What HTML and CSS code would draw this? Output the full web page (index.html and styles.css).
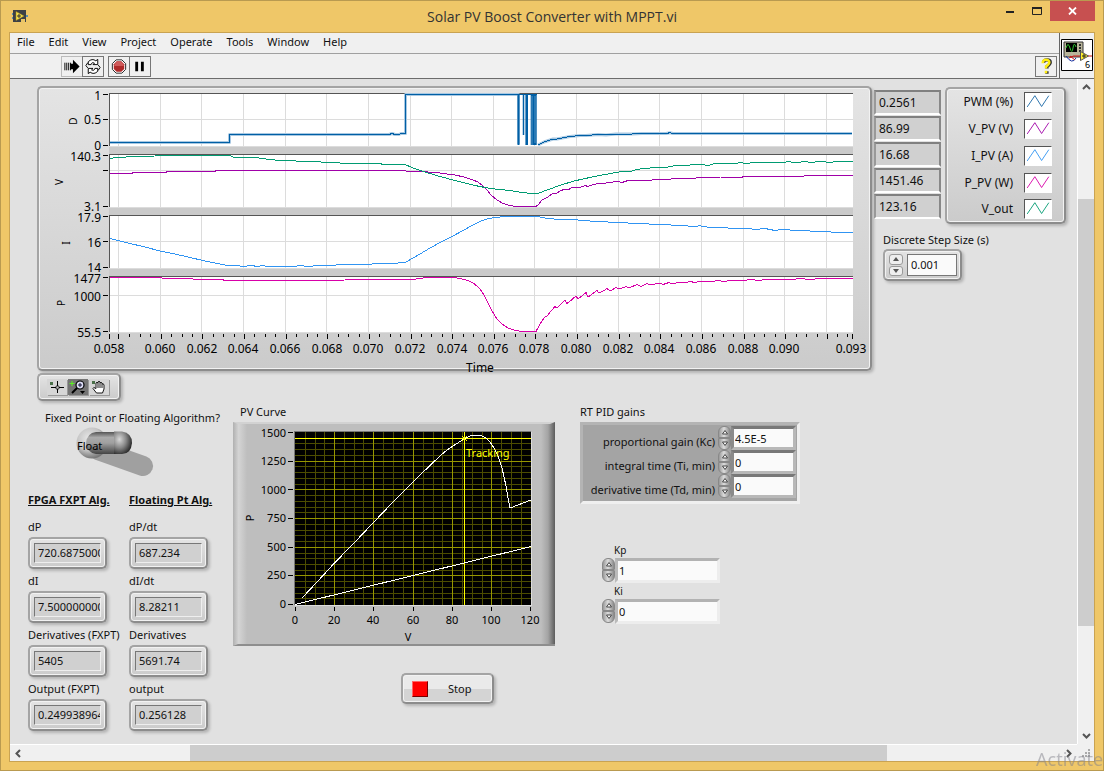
FILE: index.html
```html
<!DOCTYPE html>
<html lang="en">
<head>
<meta charset="utf-8">
<title>Solar PV Boost Converter with MPPT.vi</title>
<link rel="stylesheet" href="styles.css">
</head>
<body>
<svg class="defs" aria-hidden="true">
  <defs>
    <symbol id="tri-up" viewBox="0 0 8 6"><path d="M1.500 5 4 1.500 6.500 5z" fill="#fff" stroke="#444" stroke-width="1"/></symbol>
    <symbol id="tri-down" viewBox="0 0 8 6"><path d="M1.500 1 6.500 1 4 4.500z" fill="#fff" stroke="#444" stroke-width="1"/></symbol>
    <symbol id="wave" viewBox="0 0 28 20"><path d="M2 15.500 10.500 3 18 15 26 3" fill="none" stroke="currentColor"/></symbol>
  </defs>
</svg>
<div class="window">
  <header class="titlebar">
    <svg class="app-icon" viewBox="0 0 16 14"><path d="M0 4h2v2H0zM0 8h2v2H0zM14 6h2v2h-2z" fill="#5a8fae"/><path d="M1 1h13v12H1z" fill="#3d4146"/><path d="M4 2.500 12 7 4 11.500z" fill="#f5e04a" stroke="#a58a1a" stroke-width=".5"/><path d="M5 7h4M7 5v4" stroke="#333"/><path d="M9 10h4v3H9z" fill="#e9c566"/></svg>
    <h1 class="title">Solar PV Boost Converter with MPPT.vi</h1>
    <div class="window-buttons">
      <button class="win-btn" aria-label="Minimize"><svg width="10" height="10"><path d="M1 5h8v2H1z" fill="#222"/></svg></button>
      <button class="win-btn" aria-label="Maximize"><svg width="10" height="10"><path d="M.5 1.500h9v7h-9z" fill="none" stroke="#222"/><path d="M0 1h10v2H0z" fill="#222"/></svg></button>
      <button class="win-btn close" aria-label="Close"><svg width="9" height="8"><path d="M1 .5l7 7M8 .5l-7 7" stroke="#fff" stroke-width="1.800"/></svg></button>
    </div>
  </header>

  <div class="client">
    <div class="head">
      <div class="bars">
        <nav class="menu">
          <button>File</button><button>Edit</button><button>View</button><button>Project</button><button>Operate</button><button>Tools</button><button>Window</button><button>Help</button>
        </nav>
        <div class="toolbar">
          <div class="tool-group">
            <button class="tool light" aria-label="Run"><svg viewBox="0 0 20 20"><path d="M2.500 6v8M4.500 6v8M6.500 6v8M8.500 6v8" stroke="#000"/><path d="M8 7h3V3l7 7-7 7v-4H8z" fill="#000"/></svg></button>
            <button class="tool" aria-label="Run continuously"><svg viewBox="0 0 20 20" fill="#fff" stroke="#000" stroke-width="1"><path d="M5 8V5q4-4 8-1l2-1.500V8h-5l1.500-1.500Q8.500 5 8 8z"/><path d="M15 12v3q-4 4-8 1l-2 1.500V12h5l-1.500 1.500q3 1.500 3.500-1.500z"/><path d="M15.500 8.500 17.500 11l-2 3M4.500 11.500 2.500 9l2-3" fill="none"/></svg></button>
          </div>
          <div class="tool-group">
            <button class="tool" aria-label="Abort"><svg viewBox="0 0 20 20"><path d="M7 3h6l4 4v6l-4 4H7l-4-4V7z" fill="#fff" stroke="#222"/><path d="M7.500 4.500h5l3 3v5l-3 3h-5l-3-3v-5z" fill="#b02a2a"/><path d="M7.500 5h5l2.500 3v1.500H5V8z" fill="#cf5a5a"/></svg></button>
            <button class="tool" aria-label="Pause"><svg viewBox="0 0 20 20"><path d="M5 5h3v10H5zM11 5h3v10h-3z" fill="#000"/></svg></button>
          </div>
          <button class="tool help" aria-label="Context help"><svg viewBox="0 0 20 20" fill="none"><path d="M7.500 6q0-3 3.500-3t3.500 2.500q0 2-3.500 4.500v2M11 15v2.500" stroke="#333" stroke-width="3.500"/><path d="M6.500 6.500q0-3.500 3.500-3.500t3.500 2.500q0 2-3.500 4.500v2M10 14.500V17" stroke="#ffee10" stroke-width="2.600"/></svg></button>
        </div>
      </div>
      <div class="vi-cell">
        <svg class="vi-icon" viewBox="0 0 32 32"><path d="M.5.5h31v31H.5z" fill="#fff" stroke="#000"/><path d="M3 3h19v15H3z" fill="#b9b59a" stroke="#333"/><path d="M5 4h11v9H5z" fill="#000"/><path d="M5 9q2-7 4 0t3 0 3-1" fill="none" stroke="#2fc52f"/><path d="M18 6h2M18 9h2M18 12h2" stroke="#333" stroke-width="2"/><path d="M5 17q6 9 10 2" fill="none" stroke="#112b9b"/><path d="M8 19q5-3 8-2h4M26 17h5" fill="none" stroke="#d01515"/><path d="M9 17l5 4" stroke="#d01515"/><path d="M19.500 12.500v9l8-4.500z" fill="#fff02a" stroke="#555"/><path d="M21 17h4M23 15v4" stroke="#222"/><text x="24" y="29" class="vi-num">6</text></svg>
      </div>
    </div>

    <div class="workspace">
      <main class="panel">
        <section class="top">
          <figure class="chart bezel">
            <svg viewBox="39 88 831 281" role="img" aria-label="Converter waveforms">
              <g fill="#fff"><path d="M109 93H853V146H109zM109 154H853V207H109zM109 215H853V268H109zM109 276H853V332H109z"/></g>
              <path d="M109 146H853V154H109zM109 207H853V215H109zM109 268H853V276H109z" fill="#cacaca"/>
              <g class="crisp" stroke="#dcdcdc" fill="none">
                <path d="M118.500 94V146M160.500 94V146M201.500 94V146M243.500 94V146M285.500 94V146M326.500 94V146M368.500 94V146M410.500 94V146M451.500 94V146M493.500 94V146M534.500 94V146M576.500 94V146M618.500 94V146M659.500 94V146M701.500 94V146M743.500 94V146M784.500 94V146M826.500 94V146"/>
                <path d="M118.500 154V207M160.500 154V207M201.500 154V207M243.500 154V207M285.500 154V207M326.500 154V207M368.500 154V207M410.500 154V207M451.500 154V207M493.500 154V207M534.500 154V207M576.500 154V207M618.500 154V207M659.500 154V207M701.500 154V207M743.500 154V207M784.500 154V207M826.500 154V207"/>
                <path d="M118.500 215V268M160.500 215V268M201.500 215V268M243.500 215V268M285.500 215V268M326.500 215V268M368.500 215V268M410.500 215V268M451.500 215V268M493.500 215V268M534.500 215V268M576.500 215V268M618.500 215V268M659.500 215V268M701.500 215V268M743.500 215V268M784.500 215V268M826.500 215V268"/>
                <path d="M118.500 276V332M160.500 276V332M201.500 276V332M243.500 276V332M285.500 276V332M326.500 276V332M368.500 276V332M410.500 276V332M451.500 276V332M493.500 276V332M534.500 276V332M576.500 276V332M618.500 276V332M659.500 276V332M701.500 276V332M743.500 276V332M784.500 276V332M826.500 276V332"/>
                <path d="M109 119.500H853M109 170.500H853M109 241.500H853M109 295.500H853M109 146.500H853M109 207.500H853M109 268.500H853M109 332.500H853"/>
              </g>
              <path class="crisp" d="M109.500 146V93.500H853M109.500 207V154.500H853M109.500 268V215.500H853M109.500 332V276.500H853" fill="none" stroke="#555"/>
              <g fill="none" stroke-linejoin="round">
                <g stroke="#a8c8e2" stroke-width="3"><path d="M110 142.500H229.500V134.500H389l3-1 3 1h4l2-1h4.500V94.500H518.500V144"/><path d="M538 145l6-3 9-3h4l13-2.500 10-1h6l12-1 8 .5 10-1h16l10-.5h24l4-.8 3 .8H852"/></g>
                <g stroke="#005fa5" class="crisp"><path d="M110 142.500H229.500V134.500H389l3-1 3 1h4l2-1h4.500V94.500H537"/><path d="M538 145l6-3 9-3h4l13-2.500 10-1h6l12-1 8 .5 10-1h16l10-.5h24l4-.8 3 .8H852"/></g>
                <path d="M518.500 94V145" stroke="#005fa5" stroke-width="2"/><path d="M526.700 94V145" stroke="#005fa5" stroke-width="2.600"/><path d="M523.500 94V135" stroke="#005fa5" stroke-width="1.500"/><path d="M533.700 94V145" stroke="#005fa5" stroke-width="6"/><path d="M532 96V145M535 96V143" stroke="#a8c8e2" stroke-width=".5"/>
                <g class="crisp">
                <path stroke="#a000a8" d="M110 173.500H132V172.500H166V171.500H215V170.500H406V171.500H424L432 172.500 440 173 447 174 455 175 464 177 472 179.500 478 182 483 186 487 190 491 195 497 200 503 203.500 510 205.500 516 206.500H536L539 204 542 200 545 198.500 548 197 553 193 557 193 560 191 565 189 568 190 572 187.500 577 187 580 187.500 585 185.500 588 186.500 593 184.500 600 183.500 603 184 608 182.500 613 182 618 181.500 622 182.500 628 180.500 635 181 640 180 650 180.500 656 179 668 179.500 675 178.500 690 178.800 700 177.500 712 178 720 177 740 177.500 745 176.500H785L795 176 800 176.500 808 175.500H853"/>
                <path stroke="#009b72" d="M110 158.500 116 157.500 126 157 130 156.500 155 156 160 155.500H230L233 157 240 157H252L262 158.500 275 160 287 160.500 305 161.500H309L313 162 317 161.500 325 162.500 332 162 344 163.500 360 163.500 370 164 380 163.800 385 164.500 395 164.500 406 165 412 167.500 420 170.500 430 173.500 440 176.500 455 180.500 465 183 475 185.500 485 187.500 495 189 510 190.500 522 192.500 532 193.500 537 194 543 191.500 550 189 558 186 566 183.500 574 181 583 179 592 177 597 176 605 174.500 613 173 622 171.500 632 171 636 169.500 645 168.500 655 167.500 668 167 675 165.500 684 166 690 165 702 164.500 708 165.500 715 163.500 730 164 740 162.700 748 163.500 752 162.300 762 163 770 162 780 163 788 161.700 798 162.600 804 161.500 812 162.500 820 161.200 830 162.500 838 161.200 845 162 853 161.500"/>
                <path stroke="#3094f2" d="M110 238.500 116 240 130 243.500 145 247 160 251 175 254 190 257.500 205 261 218 263.500 225 265 230 265.500 235 265 242 266.500 252 265.500 257 266.500 263 265.500 270 267 280 266 290 267 300 265.500 308 266.500 318 265.500 328 266 340 264.500 350 265 360 264 372 264 384 263.500 390 264 406 262 412 258.500 420 254 430 248 441 242 452 236.500 463 230.500 472 225.500 480 221.500 487 219 495 217.500 505 216.500H537L545 218 552 218.500 556 219.500 575 219.800 590 221 600 221 612 222.500 620 222 632 223.500 642 223 655 225 664 224 675 225.500 684 225.500 692 226.500 700 225.800 710 227.500 722 227 734 229 745 228 755 229.500 765 228.500 775 230.500 785 229 795 231 805 230 815 232 826 231 836 233 845 232 853 232.500"/>
                <path stroke="#d800a8" d="M110 277.500H162V278.500H190L196 279.500H222L225 280.500H320L345 280 360 279.500H412L420 278.500 426 277.500H455L462 279 468 280.500 474 283.500 480 289 484 295 488 303 492 311 497 319 502 324 508 328 515 330.500 522 331.500 530 331 536 331.500 540 324 544 318 545 317 547 316 551 311 555 306.500 557 308 561 304 565 300 567 303.500 572 299.500 576 296 578 299 582 296 586 292.500 588 297 593 293.500 597 290.500 599 293 605 290 607 288.500 610 291 616 287.500 620 289 626 286.500 629 288 637 284.500 641 286.500 647 283.500 651 285 659 283 663 284.500 669 282.500 672 284 680 282 684 283 690 281.500 695 282.500 702 281 710 282 718 280.500 724 281.500 732 280 742 281 750 279.500 760 280.500 765 279 775 280 784 279 793 279.500 800 278.500 810 279.500 820 278.500H853"/>
                </g>
              </g>
              <g class="crisp" stroke="#000">
                <path d="M103 94.500h5M103 119.500h5M103 145.500h5M103 155.500h5M103 170.500h5M103 206.500h5M103 216.500h5M103 241.500h5M103 267.500h5M103 277.500h5M103 295.500h5M103 331.500h5"/>
                <path d="M109.500 334v5M118.500 334v5M161.500 334v5M202.500 334v5M244.500 334v5M286.500 334v5M327.500 334v5M369.500 334v5M411.500 334v5M452.500 334v5M494.500 334v5M535.500 334v5M577.500 334v5M619.500 334v5M660.500 334v5M702.500 334v5M744.500 334v5M785.500 334v5M827.500 334v5M852.500 334v5"/>
                <path d="M129.500 334v3M140.500 334v3M150.500 334v3M171.500 334v3M182.500 334v3M192.500 334v3M213.500 334v3M223.500 334v3M234.500 334v3M254.500 334v3M265.500 334v3M275.500 334v3M296.500 334v3M307.500 334v3M317.500 334v3M338.500 334v3M348.500 334v3M359.500 334v3M379.500 334v3M390.500 334v3M400.500 334v3M421.500 334v3M431.500 334v3M442.500 334v3M463.500 334v3M473.500 334v3M484.500 334v3M504.500 334v3M515.500 334v3M525.500 334v3M546.500 334v3M556.500 334v3M567.500 334v3M587.500 334v3M598.500 334v3M608.500 334v3M629.500 334v3M640.500 334v3M650.500 334v3M671.500 334v3M681.500 334v3M692.500 334v3M712.500 334v3M723.500 334v3M733.500 334v3M754.500 334v3M764.500 334v3M775.500 334v3M796.500 334v3M806.500 334v3M817.500 334v3M837.500 334v3M847.500 334v3"/>
              </g>
              <g class="num end">
                <text x="101" y="100">1</text><text x="101" y="124">0.5</text><text x="101" y="150">0</text>
                <text x="101" y="161">140.3</text><text x="101" y="211">3.1</text>
                <text x="101" y="222">17.9</text><text x="101" y="247">16</text><text x="101" y="272">14</text>
                <text x="101" y="283">1477</text><text x="101" y="301">1000</text><text x="101" y="337">55.5</text>
              </g>
              <g class="num mid">
                <text x="109" y="353">0.058</text><text x="160" y="353">0.060</text><text x="202" y="353">0.062</text><text x="243" y="353">0.064</text><text x="285" y="353">0.066</text><text x="327" y="353">0.068</text><text x="368" y="353">0.070</text><text x="410" y="353">0.072</text><text x="452" y="353">0.074</text><text x="493" y="353">0.076</text><text x="534" y="353">0.078</text><text x="576" y="353">0.080</text><text x="618" y="353">0.082</text><text x="659" y="353">0.084</text><text x="701" y="353">0.086</text><text x="743" y="353">0.088</text><text x="784" y="353">0.090</text><text x="851" y="353">0.093</text>
                <text x="480" y="372">Time</text>
              </g>
              <g class="axis mid">
                <text transform="translate(77 121) rotate(-90)">D</text><text transform="translate(63 182) rotate(-90)">V</text><text transform="translate(70 243) rotate(-90)">I</text><text transform="translate(65 303) rotate(-90)">P</text>
              </g>
            </svg>
          </figure>

          <div class="side">
            <div class="readings">
              <output>0.2561</output><output>86.99</output><output>16.68</output><output>1451.46</output><output>123.16</output>
            </div>
            <ul class="legend bezel">
              <li>PWM (%)<svg class="c-pwm"><use href="#wave"/></svg></li>
              <li>V_PV (V)<svg class="c-vpv"><use href="#wave"/></svg></li>
              <li>I_PV (A)<svg class="c-ipv"><use href="#wave"/></svg></li>
              <li>P_PV (W)<svg class="c-ppv"><use href="#wave"/></svg></li>
              <li>V_out<svg class="c-vout"><use href="#wave"/></svg></li>
            </ul>
            <div class="step">
              <label for="step">Discrete Step Size (s)</label>
              <div class="step-box bezel">
                <div class="flat-spin"><button aria-label="Increase step"><svg width="6" height="4"><path d="M0 4 3 0l3 4z" fill="#555"/></svg></button><button aria-label="Decrease step"><svg width="6" height="4"><path d="M0 0h6L3 4z" fill="#555"/></svg></button></div>
                <input id="step" type="text" value="0.001">
              </div>
            </div>
          </div>
        </section>

        <section class="bottom">
          <div class="left">
            <div class="palette bezel">
              <button aria-label="Cursor"><svg viewBox="0 0 20 16"><path d="M3 3h3v3H3z" fill="#486f48"/><path d="M10.500 2v12M4 8.500h13" stroke="#000"/><path d="M9 7h3v3H9z" fill="#bbb" stroke="#000" stroke-width=".6"/></svg></button>
              <button class="on" aria-label="Zoom"><svg viewBox="0 0 20 16"><path d="M4 2v5M1.500 4.500h5" stroke="#5cf020"/><circle cx="12" cy="6" r="4" fill="#dcdcf4" stroke="#000" stroke-width="1.200"/><path d="M10 6h4M12 4v4" stroke="#113"/><path d="M9 9 4 14" stroke="#000" stroke-width="2"/><path d="M12 12h5l-2.500 3z"/></svg></button>
              <button aria-label="Pan"><svg viewBox="0 0 20 16"><path d="M3 2h3v3H3z" fill="#486f48"/><path d="M7.500 14 4 9.500q0-2 3 0V4q1-1.500 2 0V3q1-1.500 2 0v1q1-1.500 2 0v1q1.500-1 2 1v4l-1.500 4zM9 4v5M11 4v5M13 5v4" fill="#fff" stroke="#000" stroke-width=".9"/></svg></button>
            </div>
            <div class="switch-block">
              <label for="algo">Fixed Point or Floating Algorithm?</label>
              <button id="algo" class="switch" role="switch" aria-checked="true">
                <svg viewBox="75 426 82 54">
                  <defs>
                    <radialGradient id="ball" cx=".4" cy=".35" r=".65"><stop offset="0" stop-color="#e8e8e8"/><stop offset=".6" stop-color="#c4c4c4"/><stop offset="1" stop-color="#777"/></radialGradient>
                    <linearGradient id="lever" x2="0" y2="1"><stop offset="0" stop-color="#555"/><stop offset=".25" stop-color="#aaa"/><stop offset=".5" stop-color="#a0a0a0"/><stop offset="1" stop-color="#444"/></linearGradient>
                    <radialGradient id="tip" cx=".3" cy=".35" r=".75"><stop offset="0" stop-color="#d8d8d8"/><stop offset=".5" stop-color="#888"/><stop offset="1" stop-color="#222"/></radialGradient>
                  </defs>
                  <path d="M98 450 143 466" stroke="#a0a0a0" stroke-width="20" stroke-linecap="round"/>
                  <circle cx="92" cy="443" r="15.500" fill="url(#ball)"/>
                  <path d="M96 432H120V454H96Q86 452 86 443Q87 433 96 432z" fill="url(#lever)"/>
                  <path d="M114 431.500H122Q132 433 132 443Q131 454 122 454H114z" fill="url(#tip)"/>
                  <text x="77" y="450" class="lbl">Float</text>
                </svg>
              </button>
            </div>
            <div class="algos">
              <div class="algo">
                <h2>FPGA FXPT Alg.</h2>
                <div class="field"><span>dP</span><div class="led bezel"><output>720.6875000</output></div></div>
                <div class="field"><span>dI</span><div class="led bezel"><output>7.5000000000</output></div></div>
                <div class="field"><span>Derivatives (FXPT)</span><div class="led bezel"><output>5405</output></div></div>
                <div class="field"><span>Output (FXPT)</span><div class="led bezel"><output>0.249938964</output></div></div>
              </div>
              <div class="algo">
                <h2>Floating Pt Alg.</h2>
                <div class="field"><span>dP/dt</span><div class="led bezel"><output>687.234</output></div></div>
                <div class="field"><span>dI/dt</span><div class="led bezel"><output>8.28211</output></div></div>
                <div class="field"><span>Derivatives</span><div class="led bezel"><output>5691.74</output></div></div>
                <div class="field"><span>output</span><div class="led bezel"><output>0.256128</output></div></div>
              </div>
            </div>
          </div>

          <div class="middle">
            <h3 class="caption">PV Curve</h3>
            <svg class="pv" viewBox="233 422 322 224" role="img" aria-label="PV curve">
              <defs><linearGradient id="edge"><stop offset="0" stop-color="#bebebe"/><stop offset=".5" stop-color="#a4a4a4"/><stop offset="1" stop-color="#5c5c5c"/></linearGradient><linearGradient id="edge-l"><stop offset="0" stop-color="#b0b0b0"/><stop offset=".4" stop-color="#d4d4d4"/><stop offset="1" stop-color="#bebebe"/></linearGradient></defs>
              <path d="M233 422H555V646H233z" fill="#bebebe"/><path d="M233 422h14v224h-14z" fill="url(#edge-l)"/><path d="M541 422h14v224h-14z" fill="url(#edge)"/><path d="M233 422H555l-5 2H238z" fill="#d2d2d2"/><path d="M233 646H555v-2H238z" fill="#8e8e8e"/>
              <path d="M295 432H531V605H295z"/>
              <g class="crisp" fill="none">
                <path stroke="#4d4d00" d="M305.500 432v173M315.500 432v173M324.500 432v173M344.500 432v173M354.500 432v173M363.500 432v173M383.500 432v173M393.500 432v173M403.500 432v173M423.500 432v173M433.500 432v173M442.500 432v173M462.500 432v173M472.500 432v173M482.500 432v173M501.500 432v173M511.500 432v173M521.500 432v173M295 438.500h236M295 443.500h236M295 449.500h236M295 455.500h236M295 466.500h236M295 472.500h236M295 478.500h236M295 484.500h236M295 495.500h236M295 501.500h236M295 507.500h236M295 512.500h236M295 524.500h236M295 530.500h236M295 535.500h236M295 541.500h236M295 553.500h236M295 558.500h236M295 564.500h236M295 570.500h236M295 581.500h236M295 587.500h236M295 593.500h236M295 598.500h236"/>
                <path stroke="#969600" d="M334.500 432v173M373.500 432v173M413.500 432v173M452.500 432v173M491.500 432v173M295 461.500h236M295 489.500h236M295 518.500h236M295 547.500h236M295 575.500h236"/>
                <path stroke="#ffff00" d="M464.500 432v173M295 438.500h236"/>
                <path d="M294.500 605V431.500H531" stroke="#777"/><path d="M531.500 432v173.500H295" stroke="#ddd"/>
                <path stroke="#000" d="M288 432.500h5M288 461.500h5M288 489.500h5M288 518.500h5M288 547.500h5M288 575.500h5M288 604.500h5M295.500 607v4M334.500 607v4M373.500 607v4M413.500 607v4M452.500 607v4M491.500 607v4M530.500 607v4"/>
                <path d="M302 598 318 581 334 563.500 354 543 373 523 393 502 413 482 433 462.500 445 451.500 453 446 464 439 470 436 476 435.200 481 435.500 486 438 490 442 494 448 498 456 502 468 506 486 508 498 510 508 531 500M295 604.500 531 546.500" stroke="#fff"/>
              </g>
              <path d="M462 436l5 5M467 436l-5 5" stroke="#ff0"/>
              <text x="466" y="457" class="lbl track">Tracking</text>
              <g class="lbl end"><text x="286" y="437">1500</text><text x="286" y="465">1250</text><text x="286" y="494">1000</text><text x="286" y="522">750</text><text x="286" y="551">500</text><text x="286" y="579">250</text><text x="286" y="608">0</text></g>
              <g class="lbl mid"><text x="295" y="624">0</text><text x="334" y="624">20</text><text x="373" y="624">40</text><text x="413" y="624">60</text><text x="452" y="624">80</text><text x="491" y="624">100</text><text x="530" y="624">120</text><text x="408" y="641">V</text><text transform="translate(254 518) rotate(-90)">P</text></g>
            </svg>
            <button class="stop bezel"><span class="square"></span><span>Stop</span></button>
          </div>

          <div class="right">
            <h3 class="caption">RT PID gains</h3>
            <div class="cluster">
              <div class="gain"><label for="kc">proportional gain (Kc)</label><div class="spin"><button aria-label="Increase Kc"><svg><use href="#tri-up"/></svg></button><button aria-label="Decrease Kc"><svg><use href="#tri-down"/></svg></button></div><input id="kc" type="text" value="4.5E-5"></div>
              <div class="gain"><label for="ti">integral time (Ti, min)</label><div class="spin"><button aria-label="Increase Ti"><svg><use href="#tri-up"/></svg></button><button aria-label="Decrease Ti"><svg><use href="#tri-down"/></svg></button></div><input id="ti" type="text" value="0"></div>
              <div class="gain"><label for="td">derivative time (Td, min)</label><div class="spin"><button aria-label="Increase Td"><svg><use href="#tri-up"/></svg></button><button aria-label="Decrease Td"><svg><use href="#tri-down"/></svg></button></div><input id="td" type="text" value="0"></div>
            </div>
            <div class="pi">
              <div class="pi-field"><label for="kp">Kp</label><div class="pi-row"><div class="spin"><button aria-label="Increase Kp"><svg><use href="#tri-up"/></svg></button><button aria-label="Decrease Kp"><svg><use href="#tri-down"/></svg></button></div><input id="kp" type="text" value="1"></div></div>
              <div class="pi-field"><label for="ki">Ki</label><div class="pi-row"><div class="spin"><button aria-label="Increase Ki"><svg><use href="#tri-up"/></svg></button><button aria-label="Decrease Ki"><svg><use href="#tri-down"/></svg></button></div><input id="ki" type="text" value="0"></div></div>
            </div>
          </div>
        </section>
      </main>

      <div class="vscroll">
        <button aria-label="Scroll up"><svg width="9" height="6"><path d="M1 5l3.500-3.500L8 5" fill="none" stroke="#555" stroke-width="2"/></svg></button>
        <div class="track-v"><div class="thumb-v"></div></div>
        <button aria-label="Scroll down"><svg width="9" height="6"><path d="M1 1l3.500 3.500L8 1" fill="none" stroke="#555" stroke-width="2"/></svg></button>
      </div>
      <div class="hscroll">
        <button aria-label="Scroll left"><svg width="6" height="9"><path d="M5 1 1.500 4.500 5 8" fill="none" stroke="#555" stroke-width="2"/></svg></button>
        <div class="track-h"><div class="thumb-h"></div></div>
        <button aria-label="Scroll right"><svg width="6" height="9"><path d="M1 1l3.500 3.500L1 8" fill="none" stroke="#555" stroke-width="2"/></svg></button>
      </div>
      <div class="grip"><svg width="9" height="9"><path d="M7 1h2v2H7zM4 4h2v2H4zM7 4h2v2H7zM1 7h2v2H1zM4 7h2v2H4zM7 7h2v2H7z" fill="#aaa"/></svg></div>
    </div>
  </div>
</div>
<div class="watermark">Activate Windows</div>
</body>
</html>
```
FILE: styles.css
```css
* { box-sizing: border-box; }

body {
  margin: 0;
  font: 11px/16px "Noto Sans", "Open Sans", sans-serif;
  color: #111;
}

button {
  margin: 0;
  padding: 0;
  border: 0;
  background: none;
  font: inherit;
  color: inherit;
}

input {
  margin: 0;
  min-width: 0;
  font: inherit;
  color: inherit;
}

svg { display: block; }
h1, h2, h3, ul, figure { margin: 0; padding: 0; }

.defs { position: absolute; width: 0; height: 0; }

.window {
  display: flex;
  flex-direction: column;
  min-height: 100vh;
  padding: 0 8px 8px;
  border: 1px solid #b99a50;
  background: #efc768;
}

/* Title bar */
.titlebar {
  display: grid;
  grid-template-columns: 1fr auto 1fr;
  height: 31px;
}
.app-icon { width: 16px; height: 14px; margin: 8px 0 0 3px; }
.title { font-family: "Open Sans", "Noto Sans", sans-serif; font-size: 14px; line-height: 31px; font-weight: 400; color: #333; }
.window-buttons { display: flex; justify-content: flex-end; height: 20px; }
.win-btn { display: flex; align-items: center; justify-content: center; width: 27px; }
.win-btn.close { width: 45px; background: #c75050; }

.client {
  display: flex;
  flex: 1;
  flex-direction: column;
  border: 1px solid #c9a352;
}

/* Menu and toolbar */
.head { display: flex; background: #f0f0f0; border-bottom: 1px solid #6c6c6c; }
.bars { flex: 1; }
.menu {
  display: flex;
  gap: 14px;
  height: 21px;
  padding: 0 7px 2px;
  border-bottom: 1px solid #a0a0a0;
}
.toolbar { display: flex; gap: 4px; padding: 2px 2px 1px 51px; height: 24px; }
.tool-group { display: flex; }
.tool { width: 22px; height: 21px; border: 1px solid #777; }
.tool.light { border-color: #bbb; }
.tool + .tool { margin-left: -1px; }
.tool svg { width: 20px; height: 19px; }
.tool.help { margin-left: auto; }
.vi-cell { padding: 6px 1px 0; border-left: 1px solid #666; }
.vi-icon { width: 32px; height: 32px; }
.vi-num { font-size: 9px; }

/* Scrolling area */
.workspace {
  display: grid;
  flex: 1;
  grid-template: 1fr 17px / 1fr 17px;
  background: #f0f0f0;
}
.vscroll { display: flex; flex-direction: column; border-left: 1px solid #fff; }
.vscroll button, .hscroll button { display: flex; align-items: center; justify-content: center; width: 16px; height: 16px; }
.hscroll { display: flex; border-top: 1px solid #fff; }
.track-v { flex: 1; padding-top: 104px; }
.thumb-v { height: calc(100% - 102px); background: #cdcdcd; }
.track-h { flex: 1; padding-left: 15.4%; }
.thumb-h { width: 80%; height: 16px; background: #cdcdcd; }
.grip { display: flex; align-items: flex-end; justify-content: flex-end; padding: 4px; }

/* Front panel */
.panel { padding: 7px 11px 4px 17px; background: #e1e1e1; }

.bezel {
  border: 2px solid #8e8e8e;
  border-color: #a4a4a4 #8c8c8c #8c8c8c #a4a4a4;
  border-radius: 5px;
  background: linear-gradient(#e4e4e4, #cbcbcb);
  box-shadow: inset 0 0 0 1px #f2f2f2, 2px 2px 3px rgba(0, 0, 0, .2);
}

.top { display: flex; gap: 2px; }
.chart { flex: 1; margin-left: 10px; height: max-content; }
.chart svg { width: 100%; height: auto; overflow: visible; }
.crisp { shape-rendering: crispEdges; }
.num { font-size: 12px; }
.axis { font-size: 10px; }
.lbl { font-size: 11px; }
.end { text-anchor: end; }
.mid { text-anchor: middle; }
.track { fill: #ff0; }

.side {
  display: grid;
  grid-template-columns: 67px 121px;
  align-content: start;
  column-gap: 4px;
}
.readings { display: grid; gap: 1px; align-content: start; padding-top: 4px; font-size: 12px; }
.readings output {
  height: 25px;
  padding: 0 3px;
  border: 2px solid;
  border-color: #808080 #888 #fff #999;
  background: #d0d0d0;
  line-height: 22px;
}
.legend { margin-top: 1px; list-style: none; font-size: 12px; }
.legend li {
  display: flex;
  align-items: center;
  justify-content: flex-end;
  gap: 11px;
  height: 27px;
  padding-right: 12px;
}
.legend li:first-child, .legend li:last-child { height: 26px; }
.legend svg { width: 28px; height: 20px; border: 1px solid; border-color: #555 #fff #fff #555; background: #fff; }
.c-pwm { color: #1766a5; stroke-width: 1px; }
.c-vpv { color: #a000a8; }
.c-ipv { color: #3094f2; }
.c-ppv { color: #d800a8; }
.c-vout { color: #009b72; }

.step { grid-column: 1 / 3; justify-self: start; padding: 8px 0 0 9px; }
.step-box { display: flex; gap: 4px; width: 79px; height: 32px; margin-top: 1px; padding: 3px 3px 3px 4px; }
.flat-spin { display: grid; gap: 1px; width: 14px; }
.flat-spin button { display: flex; align-items: center; justify-content: center; border: 1px solid #999; border-radius: 3px; background: #eee; }
.step-box input { flex: 1; border: 1px solid #777; padding: 0 3px; background: #fafafa; }

.bottom { display: flex; }
.left { width: 206px; padding-top: 2px; }
.middle { width: 322px; padding-top: 33px; }
.right { margin-left: 25px; padding-top: 33px; }
.caption { font-size: 11px; font-weight: 400; line-height: 16px; }
.middle .caption { padding-left: 7px; }

.palette { display: flex; gap: 1px; width: 84px; height: 28px; margin-left: 10px; padding: 4px 8px; }
.palette button { width: 20px; height: 16px; background: #d6d6d6; box-shadow: 1px 1px 0 #999; }
.palette .on { background: #747474; }
.palette svg { width: 20px; height: 16px; }

.switch-block { padding: 9px 0 0 18px; white-space: nowrap; }
.switch { display: block; width: 82px; margin-left: 30px; }

.algos { display: grid; grid-template-columns: 79px 79px; gap: 22px; padding: 12px 0 0 1px; }
.algo h2 { height: 27px; font-size: 11px; font-weight: 700; line-height: 16px; text-decoration: underline; white-space: nowrap; }
.field { height: 54px; white-space: nowrap; }
.field > span { display: block; line-height: 16px; }
.led { height: 32px; margin-top: 2px; padding: 4px; }
.led output { display: block; height: 20px; padding: 0 3px; border: 1px solid; border-color: #777 #eee #eee #777; background: #d0d0d0; line-height: 18px; overflow: hidden; }

.pv { width: 100%; height: auto; margin-top: 2px; }
.stop { display: flex; align-items: center; gap: 20px; width: 93px; height: 31px; margin: 27px 0 0 168px; padding-left: 9px; background: linear-gradient(#eaeaea 50%, #d4d4d4 50%); }
.square { width: 16px; height: 16px; border: 1px solid; border-color: #f66 #700 #700 #f66; background: #f00; }

.cluster { width: 220px; margin-top: 2px; padding: 1px 1px 3px 0; border: 3px solid; border-color: #b4b4b4 #efefef #efefef #b4b4b4; background: #a4a4a4; }
.gain { display: flex; justify-content: flex-end; height: 24px; }
.gain label { padding-top: 8px; margin-right: 3px; line-height: 16px; }
.gain input { width: 65px; height: 24px; padding: 0 1px; border: 3px solid; border-color: #787878 #b8b8b8 #b8b8b8 #8a8a8a; background: #fafafa; }
.spin { display: grid; width: 13px; height: 24px; }
.spin button { display: flex; align-items: center; justify-content: center; border: 1px solid #888; border-radius: 6px 6px 0 0; background: linear-gradient(90deg, #999, #ddd 45%, #888); }
.spin button + button { border-radius: 0 0 6px 6px; }
.spin svg { width: 8px; height: 6px; }

.pi { padding: 38px 0 0 22px; }
.pi-field { height: 41px; }
.pi-field label { display: block; margin-left: 12px; line-height: 16px; font-size: 10px; }
.pi-row { display: flex; }
.pi-row input { width: 105px; height: 25px; padding: 0 1px; border: 3px solid; border-color: #b2b2b2 #ededed #ededed #bababa; background: #fafafa; }

.watermark {
  position: fixed;
  right: 0;
  bottom: 0;
  width: 68px;
  overflow: hidden;
  font-size: 18px;
  line-height: 24px;
  white-space: nowrap;
  color: rgba(130, 130, 140, .5);
}
```
